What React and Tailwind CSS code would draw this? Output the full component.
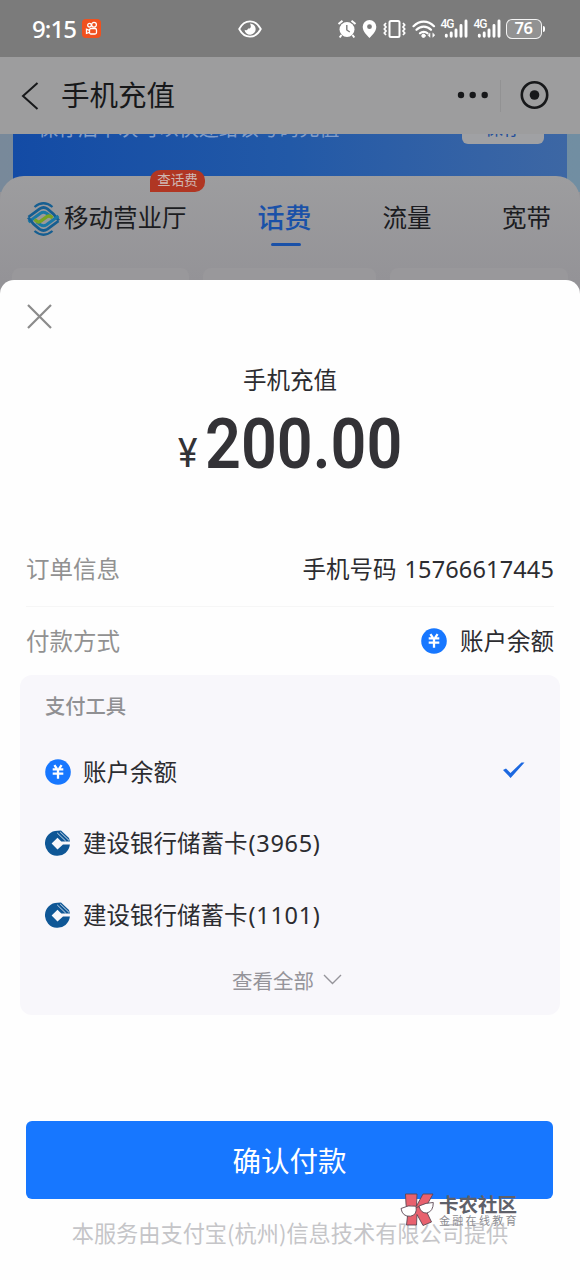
import React, { useState } from 'react';

// Payment methods shown in the tool list
const payMethods = [
    { id: 'balance', name: '账户余额', tail: '', icon: 'balance' },
    { id: 'ccb-3965', name: '建设银行储蓄卡', tail: '(3965)', icon: 'ccb' },
    { id: 'ccb-1101', name: '建设银行储蓄卡', tail: '(1101)', icon: 'ccb' },
];

const BalanceIcon = () => (
    <svg className="w-[26px] h-[26px] shrink-0" viewBox="0 0 26 26" fill="none">
        <circle cx="13" cy="13" r="12.8" fill="#1777ff" />
        <path d="M9.4 6.2l2.4 3.4M16.600 6.200l-2.400 3.400M7.700 10.300h10.600M7.700 14.600h10.600M13 10v9.800" stroke="#fff" strokeWidth="2.300" />
    </svg>
);

const CcbIcon = () => (
    <svg className="w-[26px] h-[26px] shrink-0" viewBox="0 0 26 26" fill="none">
        <path d="M12.500 .8A12.500 12.500 0 1 0 24.900 14.600H18L12.500 19.600 6.600 13.600 12.500 7.700 16.300 11.400H25L24 8 16 .5z" fill="#0f5796" />
        <path d="M12.200 2.900l8.600 8.300M15.200 2l9 8.600" stroke="#f8f7fb" strokeWidth="0.800" />
    </svg>
);

const MobileLogo = () => (
    <svg className="w-[33px] h-[34px] shrink-0" viewBox="0 0 33 34" fill="none">
        <g stroke="#155e91">
            <path d="M7.500 5Q16.500-2.500 25.500 5" strokeWidth="2.200" />
            <path d="M1.500 15L12.500 6.800q4-2.600 8 0Q27 11.500 31.800 18.500" strokeWidth="2.800" />
            <path d="M1.500 20L13.500 11.200q3-2 6 0l4 3" strokeWidth="3" stroke="#1a78a5" />
        </g>
        <g stroke="#155e91" transform="rotate(180 16.500 17)">
            <path d="M7.500 5Q16.500-2.500 25.500 5" strokeWidth="2.200" />
            <path d="M1.500 15L12.500 6.800q4-2.600 8 0Q27 11.500 31.800 18.500" strokeWidth="2.800" />
            <path d="M1.500 20L13.500 11.200q3-2 6 0l4 3" strokeWidth="3" stroke="#1a78a5" />
        </g>
        <path d="M7.500 17.500l2.500 1.900q1.800 1.200 3.800-.2l6.400-4.700q2-1.200 3.800.2l1.500 1.200" stroke="#78a323" strokeWidth="3.400" />
    </svg>
);

const Signal = () => (
    <div className="relative w-[27px] h-5 shrink-0">
        <span className="absolute left-0 top-0 font-['Roboto'] text-[12px] leading-[11px] font-medium tracking-[-1px]">4G</span>
        <svg className="block w-[27px] h-5" viewBox="0 0 27 20" fill="none" stroke="#fff" strokeWidth="2.900" strokeLinecap="round">
            <path d="M5.300 16.200v1M10.200 14v3.200M15 11v6.200M20 6.500v10.700M25 2v15.200" />
        </svg>
    </div>
);

const StatusBar = () => (
    <div className="h-[57px] bg-[#7b7b7b] flex items-center pl-8 pr-[35px] text-white">
        <span className="font-['Noto_Sans'] text-[24px] leading-7 font-medium tracking-[-0.9px] w-[50px] whitespace-nowrap">9:15</span>
        <span className="w-[19px] h-[19px] rounded bg-[#f0511f] flex items-center justify-center">
            <svg className="w-[15px] h-[15px]" viewBox="0 0 15 15" fill="none" stroke="#fff" strokeWidth="1.300">
                <circle cx="5.500" cy="4.200" r="1.800" />
                <circle cx="10" cy="3.800" r="2.400" />
                <rect x="5.500" y="7.500" width="7" height="5.500" rx="1.500" />
                <path d="M5.500 9.300L2.500 8.200v4.200l3-1.100" />
            </svg>
        </span>
        <svg className="ml-[137px] w-6 h-[18px]" viewBox="0 0 24 18" fill="none">
            <path d="M1.200 9C6.500-1.200 17.500-1.200 22.800 9 17.500 19.200 6.500 19.200 1.200 9z" stroke="#fff" strokeWidth="1.800" />
            <path d="M12 3.500A5.600 5.600 0 1 1 6.500 9.800c1.300 1 3.200.2 3.600-1.400 1.700.5 3-.9 2.700-2.500-.1-.9-.5-1.600-.8-2.400z" fill="#fff" />
        </svg>

        <div className="ml-auto flex items-center">
            <svg className="w-5 h-5" viewBox="0 0 20 20" fill="none">
                <circle cx="10" cy="10.500" r="7.500" fill="#fff" />
                <path d="M1.500 5L5.500 1.700M18.500 5l-4-3.300M4.500 16l-1.800 2.500M15.500 16l1.800 2.500" stroke="#fff" strokeWidth="2" />
                <path d="M9.800 6v5l3 2" stroke="#7b7b7b" strokeWidth="1.400" />
            </svg>
            <svg className="ml-[5px] w-[15px] h-5" viewBox="0 0 15 20" fill="#fff">
                <path fillRule="evenodd" d="M7.500 1A6.800 6.800 0 0 1 14.300 7.800C14.300 12.500 10 16.500 7.500 19 5 16.500.7 12.500.7 7.800A6.800 6.800 0 0 1 7.500 1zm0 4.300a2.400 2.400 0 1 0 0 4.800 2.400 2.400 0 0 0 0-4.800z" />
            </svg>
            <svg className="ml-[6px] w-[23px] h-5" viewBox="0 0 23 20" fill="none" stroke="#fff" strokeWidth="2">
                <rect x="6.500" y="2" width="10" height="16" rx="1.500" />
                <path d="M3 4l-1.700 2L3 8l-1.700 2L3 12l-1.700 2L3 16M20 4l1.700 2L20 8l1.700 2L20 12l1.700 2L20 16" strokeWidth="1.700" />
            </svg>
            <svg className="ml-[6px] w-6 h-5" viewBox="0 0 24 20" fill="none" stroke="#fff" strokeWidth="2.200" strokeLinecap="round">
                <path d="M1.500 7.200C7.500 1 16 1 22 7.200M4.500 10.800c4-4.300 10.500-4.300 14.500 0M8 14.300c2-2 5.500-2 7.500 0" />
                <circle cx="11.500" cy="16.800" r="1.700" fill="#fff" strokeWidth="1" />
                <path d="M18 14.300v4l-1.900-2zM20.800 14.300v4l1.900-2z" fill="#fff" strokeWidth="0.500" />
            </svg>
            <div className="ml-[5px]"><Signal /></div>
            <div className="ml-[6px]"><Signal /></div>
            <div className="ml-[5px] w-[36px] h-5 rounded-[6px] border-[1.5px] border-white/90 bg-[#929292] flex items-center justify-center font-['Noto_Sans'] text-[16.500px] leading-none font-semibold tracking-[-0.500px]">
                76
            </div>
            <span className="ml-[1.500px] w-[2px] h-[6px] rounded-r bg-white" />
        </div>
    </div>
);

const NavBar = () => (
    <div className="h-[77px] bg-[#9d9d9e] flex items-center pl-[21px] pr-[31px] text-[#17181a]">
        <svg className="w-[18px] h-7" viewBox="0 0 18 28" fill="none" stroke="currentColor" strokeWidth="2">
            <path d="M16.500 1L2 14l14.500 13" />
        </svg>
        <h1 className="ml-[22px] text-[28.500px] leading-[40px] pb-[4px]">手机充值</h1>
        <svg className="ml-auto -mt-[2px] w-8 h-2" viewBox="0 0 32 8" fill="currentColor">
            <circle cx="4" cy="4" r="3.200" />
            <circle cx="15.700" cy="4" r="3.200" />
            <circle cx="27.700" cy="4" r="3.200" />
        </svg>
        <span className="ml-[11px] w-px h-8 bg-[#929293]" />
        <svg className="ml-[18px] -mt-px w-[30px] h-[30px]" viewBox="0 0 30 30" fill="none">
            <circle cx="15.500" cy="15" r="12.700" stroke="currentColor" strokeWidth="2.600" />
            <circle cx="15.500" cy="15" r="4.800" fill="currentColor" />
        </svg>
    </div>
);

// Lower edge of the banner, its text scrolled under the nav bar
const Banner = () => (
    <div className="h-[58px] overflow-hidden bg-linear-to-r from-[#78899a] to-[#718ea2] px-[13px]">
        <div className="h-full bg-linear-to-r from-[#134ba5] via-[#2259a7] to-[#3d67a4] flex items-start justify-between pl-[25px] pr-[23px]">
            <span className="-mt-[21px] text-[20.100px] leading-[30px] text-[#819dc9] whitespace-nowrap">保存后下次可以快速给该号码充值</span>
            <span className="-mt-[31px] w-[82px] h-[41px] rounded-[6px] bg-[#a0a1a4] text-[#234f9a] text-[18px] leading-[48px] text-center">保存</span>
        </div>
    </div>
);

const Tabs = () => (
    <div className="relative -mt-4 h-[104px] rounded-t-[24px] bg-linear-to-b from-[#9d9d9f] to-[#949397] text-[#1b1c21]">
        <span className="absolute left-[150px] -top-[6px] w-[55px] h-[22px] rounded-[10px] rounded-bl-none bg-[#b03623] text-[#cfb7b2] text-[13.500px] leading-[19px] text-center">
            查话费
        </span>
        <div className="h-[92px] flex items-start pl-[27px] pr-[29px] pt-[22px]">
            <div className="flex items-center h-[40px] pt-[2px]">
                <MobileLogo />
                <span className="ml-[4px] text-[24.500px] leading-[40px] pb-[5px]">移动营业厅</span>
            </div>
            <div className="ml-[71px] flex flex-col items-center text-[#1a51a8]">
                <span className="text-[27px] leading-[38px] font-medium">话费</span>
                <span className="mt-[7px] ml-[2px] w-[30px] h-[3px] rounded-full bg-[#1a51a8]" />
            </div>
            <span className="ml-[71px] text-[24.500px] leading-[38px]">流量</span>
            <span className="ml-auto text-[24.500px] leading-[38px]">宽带</span>
        </div>
        <div className="flex gap-[14px] px-[12px]">
            <span className="h-3 w-[177px] rounded-t-lg bg-[#99989b]" />
            <span className="h-3 w-[173px] rounded-t-lg bg-[#99989b]" />
            <span className="h-3 flex-1 rounded-t-lg bg-[#99989b]" />
        </div>
    </div>
);

const Watermark = () => (
    <div className="absolute left-[400px] top-[912px] flex w-[120px]">
        <svg className="w-[35px] h-[36px] shrink-0" viewBox="0 0 35 36" fill="none" stroke="#5b4652" strokeWidth="0.900">
            <path d="M5.500 2H17l-.5 12L23 2h10l-8 14.500L31.500 30 23 33.500l-6-11-.5 10.500H6.500l1-9L6 12z" fill="#e8616e" />
            <path d="M1 16.500q7-4 15-2.300 1.500 8.800-5.500 10Q2.500 25 1 16.500zM19 14q7-3.500 14.300-3.500 0 9-6.500 10.500-6 .5-7.800-7zM16 15.500l3-.8" fill="#fff" />
        </svg>
        <div className="ml-[4px] whitespace-nowrap">
            <div className="text-[19.500px] leading-[23px] font-bold text-[#5e6069]">卡农社区</div>
            <div className="-mt-[2px] text-[11px] leading-[14px] tracking-[2.300px] text-[#8c8c91]">金融在线教育</div>
        </div>
    </div>
);

const App = () => {
    const [selected, setSelected] = useState('balance');

    return (
        <div className="w-[580px] h-[1280px] overflow-hidden bg-[#949397] font-['Noto_Sans_CJK_SC',sans-serif]">
            <StatusBar />
            <NavBar />
            <Banner />
            <Tabs />

            {/* Payment sheet */}
            <div className="relative h-[1000px] rounded-t-[14px] bg-[#fefefe] text-[#2c2c30]">
                <button className="block pl-[27px] pt-[24px]">
                    <svg className="w-[25px] h-[25px]" viewBox="0 0 25 25" stroke="#8b8b8b" strokeWidth="2.200">
                        <path d="M1 1l23 23M24 1L1 24" />
                    </svg>
                </button>

                <div className="mt-[32px] text-[23.500px] leading-[36px] text-center">手机充值</div>
                <div className="mt-[18px] h-[65px] flex items-end justify-center text-[#333236]">
                    <span className="mb-px w-[27px] font-['Roboto'] text-[41px] leading-[52px]"><span className="inline-block origin-left scale-x-[0.9]">¥</span></span>
                    <span className="w-[197px] whitespace-nowrap font-['Roboto'] text-[71px] leading-[72px] font-semibold"><span className="inline-block origin-left scale-x-[0.885]">200.00</span></span>
                </div>

                <div className="mt-[52px] mx-[26px] h-[75px] border-b border-[#f6f6f6] flex items-center justify-between text-[23.500px]">
                    <span className="text-[#919191]">订单信息</span>
                    <span>手机号码<span className="ml-[8px] font-['Noto_Sans'] tracking-[0.150px]">15766617445</span></span>
                </div>
                <div className="mx-[26px] h-[68px] flex items-center text-[23.500px]">
                    <span className="mr-auto text-[#919191]">付款方式</span>
                    <BalanceIcon />
                    <span className="ml-[13px]">账户余额</span>
                </div>

                <div className="mx-5 h-[340px] rounded-[12px] bg-[#f8f7fb]">
                    <div className="pt-[15px] pl-[25px] text-[20.300px] leading-[30px] font-medium text-[#909093]">支付工具</div>
                    <div className="mt-[16px]">
                        {payMethods.map((item) => (
                            <div
                                key={item.id}
                                className="h-[71.500px] flex items-center pl-[24.500px] pr-[35px] text-[23.500px]"
                                onClick={() => setSelected(item.id)}
                            >
                                {item.icon === 'balance' ? <BalanceIcon /> : <CcbIcon />}
                                <span className="ml-[12.500px]">
                                    {item.name}
                                    <span className="ml-px font-['Noto_Sans'] tracking-[0.700px]">{item.tail}</span>
                                </span>
                                {selected === item.id && (
                                    <svg className="ml-auto -mt-[3px] w-[23px] h-[18px]" viewBox="0 0 23 18" fill="#1c68e0">
                                        <path d="M1 9l3-1.600L8.500 12 19.500 1.500h3L8.600 17z" />
                                    </svg>
                                )}
                            </div>
                        ))}
                    </div>
                    <div className="mt-[12px] pr-[6px] flex items-center justify-center gap-[9px] text-[20.500px] leading-[34px] text-[#95949a]">
                        查看全部
                        <svg className="w-[19px] h-[11px]" viewBox="0 0 19 11" fill="none" stroke="currentColor" strokeWidth="1.400">
                            <path d="M1 1l8.500 8.500L18 1" />
                        </svg>
                    </div>
                </div>

                <button className="mt-[106px] ml-[26px] block w-[527px] h-[78px] rounded-[6px] bg-[#1777ff] text-white text-[28.500px] leading-[78px] text-center">
                    确认付款
                </button>
                <div className="mt-[16px] text-[22.200px] leading-[34px] text-center text-[#c5c5c8] whitespace-nowrap">
                    本服务由支付宝(杭州)信息技术有限公司提供
                </div>
                <Watermark />
            </div>
        </div>
    );
};

export default App;
